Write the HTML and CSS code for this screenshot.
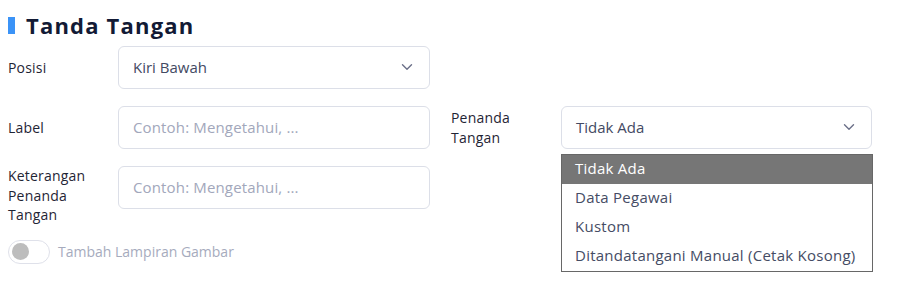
FILE: index.html
```html
<!DOCTYPE html>
<html lang="id">
<head>
<meta charset="utf-8">
<title>Tanda Tangan</title>
<link rel="stylesheet" href="styles.css">
</head>
<body>
<div class="page">
  <h2 class="title"><span class="bar"></span>Tanda Tangan</h2>
  <div class="form">
    <div class="row">
      <div class="group">
        <label class="lbl">Posisi</label>
        <div class="control select">
          <span class="value">Kiri Bawah</span>
          <svg class="chev" width="12" height="8" viewBox="0 0 12 8"><path d="M1.5 1.8 6 6.2 10.5 1.8" fill="none" stroke="#6b7088" stroke-width="1.4" stroke-linecap="round" stroke-linejoin="round"/></svg>
        </div>
      </div>
    </div>
    <div class="row">
      <div class="group">
        <label class="lbl">Label</label>
        <div class="control"><span class="ph">Contoh: Mengetahui, ...</span></div>
      </div>
      <div class="group">
        <label class="lbl">Penanda<br>Tangan</label>
        <div class="select-wrap">
          <div class="control select">
            <span class="value">Tidak Ada</span>
            <svg class="chev" width="12" height="8" viewBox="0 0 12 8"><path d="M1.5 1.8 6 6.2 10.5 1.8" fill="none" stroke="#6b7088" stroke-width="1.4" stroke-linecap="round" stroke-linejoin="round"/></svg>
          </div>
          <ul class="menu">
            <li class="opt active">Tidak Ada</li>
            <li class="opt">Data Pegawai</li>
            <li class="opt">Kustom</li>
            <li class="opt">Ditandatangani Manual (Cetak Kosong)</li>
          </ul>
        </div>
      </div>
    </div>
    <div class="row">
      <div class="group">
        <label class="lbl">Keterangan<br>Penanda<br>Tangan</label>
        <div class="control"><span class="ph">Contoh: Mengetahui, ...</span></div>
      </div>
    </div>
    <div class="toggle-row">
      <span class="switch"><span class="knob"></span></span>
      <span class="toggle-label">Tambah Lampiran Gambar</span>
    </div>
  </div>
</div>
</body>
</html>
```
FILE: styles.css
```css
* { box-sizing: border-box; }
body {
  margin: 0;
  background: #ffffff;
  font-family: "Open Sans", "Noto Sans", sans-serif;
  color: #1d2435;
}
.page { padding: 10px 8px 8px; }
.title {
  display: flex;
  align-items: center;
  gap: 11px;
  margin: 0 0 6px;
  height: 30px;
  font-size: 22px;
  font-weight: 700;
  letter-spacing: 1.2px;
  color: #121a35;
}
.bar {
  width: 7px;
  height: 17px;
  background: #3b93f7;
  display: block;
}
.form { display: flex; flex-direction: column; }
.row {
  display: grid;
  grid-template-columns: 422px 421px;
  column-gap: 21px;
  margin-bottom: 17px;
  align-items: start;
}
.group {
  display: grid;
  grid-template-columns: 110px 1fr;
  align-items: start;
}
.lbl {
  min-height: 43px;
  display: flex;
  align-items: center;
  font-size: 14px;
  letter-spacing: 0.2px;
  line-height: 19.5px;
  color: #1f2535;
}
.control {
  height: 43px;
  border: 1px solid #dcdfe8;
  border-radius: 6px;
  display: flex;
  align-items: center;
  padding: 0 14px 1px;
  font-size: 15px;
}
.select { justify-content: space-between; padding-right: 16px; }
.value { color: #434a63; font-weight: 500; }
.ph { color: #a2a7bb; letter-spacing: 0.15px; }
.chev { display: block; }
.select-wrap { position: relative; }
.menu {
  position: absolute;
  top: 48px;
  left: 0;
  width: 312px;
  margin: 0;
  padding: 0;
  list-style: none;
  border: 1px solid #676767;
  background: #ffffff;
  z-index: 2;
}
.opt {
  height: 29px;
  display: flex;
  align-items: center;
  padding: 0 0 3px 13px;
  font-size: 15px;
  letter-spacing: 0.25px;
  color: #454c64;
}
.opt.active { background: #767676; color: #ffffff; font-weight: 500; }
.toggle-row {
  display: flex;
  align-items: center;
  gap: 8px;
  margin-top: -2px;
}
.switch {
  width: 42px;
  height: 24px;
  border: 1px solid #dfe1ea;
  border-radius: 12px;
  display: flex;
  align-items: center;
  padding-left: 3px;
}
.knob {
  width: 17px;
  height: 17px;
  border-radius: 50%;
  background: #bdbdbd;
}
.toggle-label { font-size: 14px; color: #a6abbd; }
```
